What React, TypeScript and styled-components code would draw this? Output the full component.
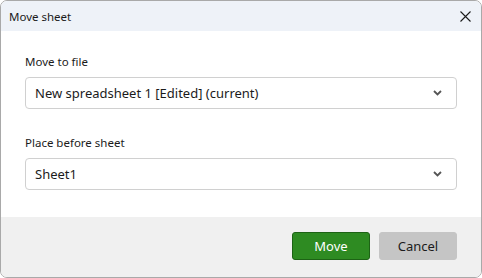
import { createGlobalStyle } from "styled-components";
import styled from "styled-components";

const GlobalStyle = createGlobalStyle`
  html, body {
    margin: 0;
    padding: 0;
    background: #ffffff;
  }
  * {
    box-sizing: border-box;
  }
`;

const fields = [
  { label: "Move to file", value: "New spreadsheet 1 [Edited] (current)" },
  { label: "Place before sheet", value: "Sheet1" },
];

export default function App() {
  return (
    <>
      <GlobalStyle />
      <Dialog>
        <TitleBar>
          <Title>Move sheet</Title>
          <CloseButton aria-label="Close">
            <svg width="11" height="11" viewBox="0 0 11 11">
              <path d="M0.5 0.5L10.5 10.5M10.5 0.5L0.5 10.5" stroke="#1b1b1b" strokeWidth="1.1" />
            </svg>
          </CloseButton>
        </TitleBar>
        <Body>
          {fields.map((f) => (
            <Field key={f.label}>
              <Label>{f.label}</Label>
              <Select>
                <span>{f.value}</span>
                <svg width="9" height="6" viewBox="0 0 9 6">
                  <path d="M1 1L4.5 4.5L8 1" stroke="#555" strokeWidth="1.8" fill="none" />
                </svg>
              </Select>
            </Field>
          ))}
        </Body>
        <Footer>
          <Button $primary>Move</Button>
          <Button>Cancel</Button>
        </Footer>
      </Dialog>
    </>
  );
}

const Dialog = styled.div`
  width: 482px;
  height: 278px;
  border: 1px solid #a9a9a9;
  border-radius: 7px;
  overflow: hidden;
  display: flex;
  flex-direction: column;
  font-family: "Noto Sans", "Open Sans", sans-serif;
  color: #1b1b1b;
`;

const TitleBar = styled.div`
  height: 30px;
  flex-shrink: 0;
  background: #eef2f8;
  display: flex;
  align-items: center;
  justify-content: space-between;
  padding: 0 10px 0 8px;
`;

const Title = styled.div`
  font-size: 11.5px;
`;

const CloseButton = styled.div`
  width: 12px;
  height: 12px;
  display: flex;
  align-items: center;
  justify-content: center;
`;

const Body = styled.div`
  flex: 1;
  background: #ffffff;
  padding: 22px 24px 0 24px;
  display: flex;
  flex-direction: column;
  gap: 25px;
`;

const Field = styled.div`
  display: flex;
  flex-direction: column;
  gap: 7px;
`;

const Label = styled.div`
  font-size: 11.5px;
  line-height: 17px;
`;

const Select = styled.div`
  height: 32px;
  border: 1px solid #d0d0d0;
  border-radius: 4px;
  display: flex;
  align-items: center;
  justify-content: space-between;
  padding: 0 14px 0 9px;
  font-size: 13px;
`;

const Footer = styled.div`
  height: 60px;
  flex-shrink: 0;
  background: #f0f0f0;
  display: flex;
  align-items: center;
  justify-content: flex-end;
  gap: 9px;
  padding: 0 24px 2px 0;
`;

const Button = styled.div<{ $primary?: boolean }>`
  width: 78px;
  height: 28px;
  border-radius: 3px;
  display: flex;
  align-items: center;
  justify-content: center;
  font-size: 13px;
  background: ${(p) => (p.$primary ? "#2e8b22" : "#c5c5c5")};
  border: 1px solid ${(p) => (p.$primary ? "#1d6315" : "#c5c5c5")};
  color: ${(p) => (p.$primary ? "#ffffff" : "#1b1b1b")};
`;
